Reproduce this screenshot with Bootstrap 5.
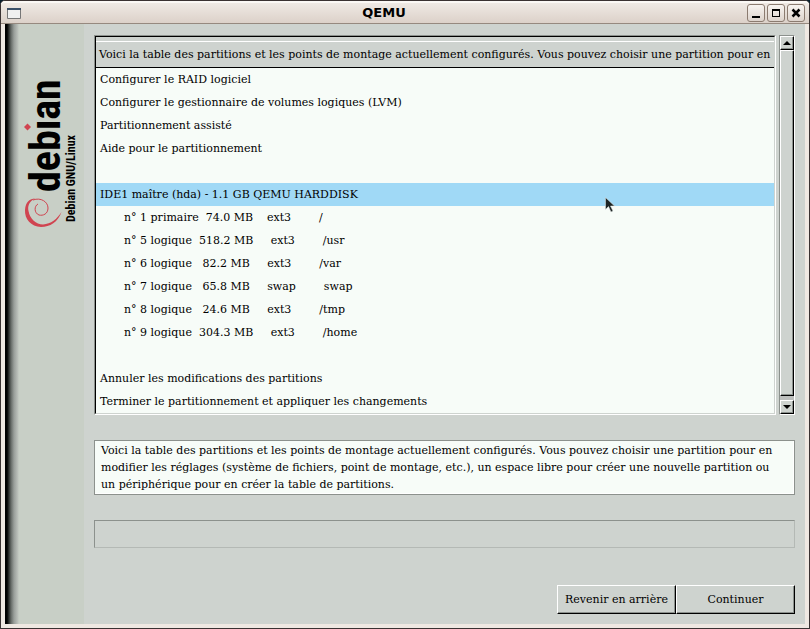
<!DOCTYPE html>
<html lang="fr">
<head>
<meta charset="utf-8">
<meta name="viewport" content="width=device-width, initial-scale=1">
<title>QEMU</title>
<link href="https://cdn.jsdelivr.net/npm/bootstrap@5.3.0/dist/css/bootstrap.min.css" rel="stylesheet">
<style>
  :root { --face: #ced3cf; --shade: #8c918d; --paper: #f7fcf8; }
  body { background: #071d2b; font: 11px/17px "DejaVu Serif", serif; color: #000; }
  .vm-window { border: 1px solid #3a3232; border-radius: 5px 5px 0 0; background: #efe8e2; }
  .titlebar { height: 23px; border-top: 2px solid #fbf8f5; border-radius: 4px 4px 0 0; border-bottom: 1px solid #96897f; background: linear-gradient(#efe9e4, #dcd1c9); padding: 0 4px 0 6px; }
  .titlebar h1 { font: bold 13px/20px "DejaVu Sans", sans-serif; }
  .win-btns { gap: 2px; }
  .win-btn { width: 18px; height: 18px; border: 1px solid #8b7b70; border-radius: 3px; background: linear-gradient(#f8f4f1, #ddd3cc); padding: 0; }
  .screen { margin: 0 4px 4px; background: var(--face); }
  .sidebar { width: 79px; padding: 51px 0 0 15px; background: linear-gradient(90deg, #000 0, #000 2px, #666b67 6px, #999e9a 9px, #bdc2bc 13px, #c8cfc6 14px); }
  .logo-name { font: bold 42px "Roboto Condensed", "Open Sans Condensed", Lato, sans-serif; }
  .logo-sub { font: bold 12px "Roboto Condensed", "Open Sans Condensed", Lato, sans-serif; }
  .pane { padding: 11px 10px 10px; }
  .stack { gap: 25px; }
  .list-row { gap: 3px; }
  .list-frame { border: 1px solid; border-color: var(--shade) #fff #fff var(--shade); min-width: 0; }
  .list-inner { border: 1px solid; border-color: #000 var(--face) var(--face) #000; background: var(--paper); }
  .parts { table-layout: fixed; width: 100%; }
  .parts th { height: 31px; padding: 4px 3px 0; background: linear-gradient(var(--face) 4px, #fff 4px, #fff 5px, var(--face) 5px); box-shadow: inset 0 -1px #000; font-weight: normal; overflow: hidden; white-space: nowrap; }
  .parts td { height: 23px; padding: 0 4px; white-space: pre; overflow: hidden; }
  .parts td.part { padding-left: 28px; }
  .parts .chosen td { background: #a0d9f6; }
  .scroller { width: 16px; border: 1px solid; border-color: var(--shade) #fff #fff var(--shade); background: #bdbfbd; }
  .raised { background: var(--face); border: 1px solid; border-color: #fff #000 #000 #fff; box-shadow: inset -1px -1px var(--shade); border-radius: 0; color: #000; }
  .step { height: 14px; padding: 0; }
  .help { border: 1px solid var(--shade); box-shadow: inset -1px -1px #fff; background: var(--paper); padding: 1px 14px 1px 6px; }
  .status { height: 28px; border: 1px solid; border-color: var(--shade) #b4b9b5 #b4b9b5 var(--shade); }
  .action { width: 119px; height: 29px; padding: 0; }
  .pointer { position: absolute; left: 75%; top: 196px; margin-left: -2px; }
</style>
<script src="https://cdn.jsdelivr.net/npm/bootstrap@5.3.0/dist/js/bootstrap.bundle.min.js"></script>
</head>
<body>
<div class="vm-window d-flex flex-column min-vh-100 position-relative">
  <header class="titlebar d-flex align-items-center">
    <svg width="14" height="11" viewBox="0 0 14 11" aria-hidden="true"><path d="M.5.5h13v10H.5z" fill="#f0f0f0" stroke="#777"/><path d="M0 0h14v2H0z" fill="#3b5068"/></svg>
    <h1 class="flex-fill text-center m-0">QEMU</h1>
    <div class="win-btns d-flex">
      <button class="win-btn d-flex" aria-label="Réduire"><svg width="16" height="16"><path d="M4 11h8v2H4z"/></svg></button>
      <button class="win-btn d-flex" aria-label="Agrandir"><svg width="16" height="16"><path d="M4 4h8v8H4zM5 6v5h6V6z" fill-rule="evenodd"/></svg></button>
      <button class="win-btn d-flex" aria-label="Fermer"><svg width="16" height="16"><path d="M4.500 4.500l7 7M11.500 4.500l-7 7" stroke="#000" stroke-width="2.500"/></svg></button>
    </div>
  </header>
  <div class="screen flex-fill d-flex">
    <aside class="sidebar flex-shrink-0">
      <svg width="60" height="160" viewBox="20 75 60 160" role="img" aria-label="Debian GNU/Linux">
        <text class="logo-name" transform="translate(60 192) rotate(-90)">debian</text>
        <path d="M24 121h11.500v10h-11.500z" fill="#c8cfc6"/>
        <path d="M27.500 123.500l3.500 3.500-3.500 3.500-3.500-3.500z" fill="#d04450"/>
        <text class="logo-sub" transform="translate(75 222) rotate(-90)">Debian GNU/Linux</text>
        <path d="M61.500 212C58 222 50 227 41 227C31 226.500 24.500 219 25 210C25.500 202 30 198.500 35 198.500C29 201.500 27.500 206 28.500 211C30 219 36 224.500 43 224.500C51 224 57 219 61.500 212z" fill="#d04450"/>
        <path d="M33 200C41 197 48 202 48 208C48 214 43 216 39 215C34 213 34 206 38 204" fill="none" stroke="#d04450"/>
      </svg>
    </aside>
    <main class="pane flex-fill d-flex flex-column">
      <div class="stack d-flex flex-column">
      <div class="list-row d-flex">
        <div class="list-frame flex-fill"><div class="list-inner">
          <table class="parts">
            <thead><tr><th scope="col">Voici la table des partitions et les points de montage actuellement configurés. Vous pouvez choisir une partition pour en</th></tr></thead>
            <tbody>
              <tr><td>Configurer le RAID logiciel</td></tr>
              <tr><td>Configurer le gestionnaire de volumes logiques (LVM)</td></tr>
              <tr><td>Partitionnement assisté</td></tr>
              <tr><td>Aide pour le partitionnement</td></tr>
              <tr><td></td></tr>
              <tr class="chosen"><td>IDE1 maître (hda) - 1.1 GB QEMU HARDDISK</td></tr>
              <tr><td class="part">n° 1 primaire  74.0 MB    ext3        /</td></tr>
              <tr><td class="part">n° 5 logique  518.2 MB     ext3        /usr</td></tr>
              <tr><td class="part">n° 6 logique   82.2 MB     ext3        /var</td></tr>
              <tr><td class="part">n° 7 logique   65.8 MB     swap        swap</td></tr>
              <tr><td class="part">n° 8 logique   24.6 MB     ext3        /tmp</td></tr>
              <tr><td class="part">n° 9 logique  304.3 MB     ext3        /home</td></tr>
              <tr><td></td></tr>
              <tr><td>Annuler les modifications des partitions</td></tr>
              <tr><td>Terminer le partitionnement et appliquer les changements</td></tr>
            </tbody>
          </table>
        </div></div>
        <div class="scroller d-flex flex-column flex-shrink-0">
          <button class="raised step" aria-label="Défiler vers le haut"><svg class="d-block mx-auto" width="8" height="4"><path d="M0 4l4-4 4 4z"/></svg></button>
          <div class="raised flex-fill"></div>
          <button class="raised step mt-1" aria-label="Défiler vers le bas"><svg class="d-block mx-auto" width="8" height="4"><path d="M0 0l4 4 4-4z"/></svg></button>
        </div>
      </div>
      <p class="help m-0">Voici la table des partitions et les points de montage actuellement configurés. Vous pouvez choisir une partition pour en modifier les réglages (système de fichiers, point de montage, etc.), un espace libre pour créer une nouvelle partition ou un périphérique pour en créer la table de partitions.</p>
      <div class="status"></div>
      </div>
      <div class="d-flex justify-content-end mt-auto">
        <button class="raised action">Revenir en arrière</button>
        <button class="raised action">Continuer</button>
      </div>
    </main>
  </div>
  <svg class="pointer" width="10" height="16" aria-hidden="true"><path d="M.500 .500v12l3-3 2.500 5.500 2-1-2.500-5h4z" fill="#1c2424" stroke="#e8ecea" stroke-width=".5"/></svg>
</div>
</body>
</html>
